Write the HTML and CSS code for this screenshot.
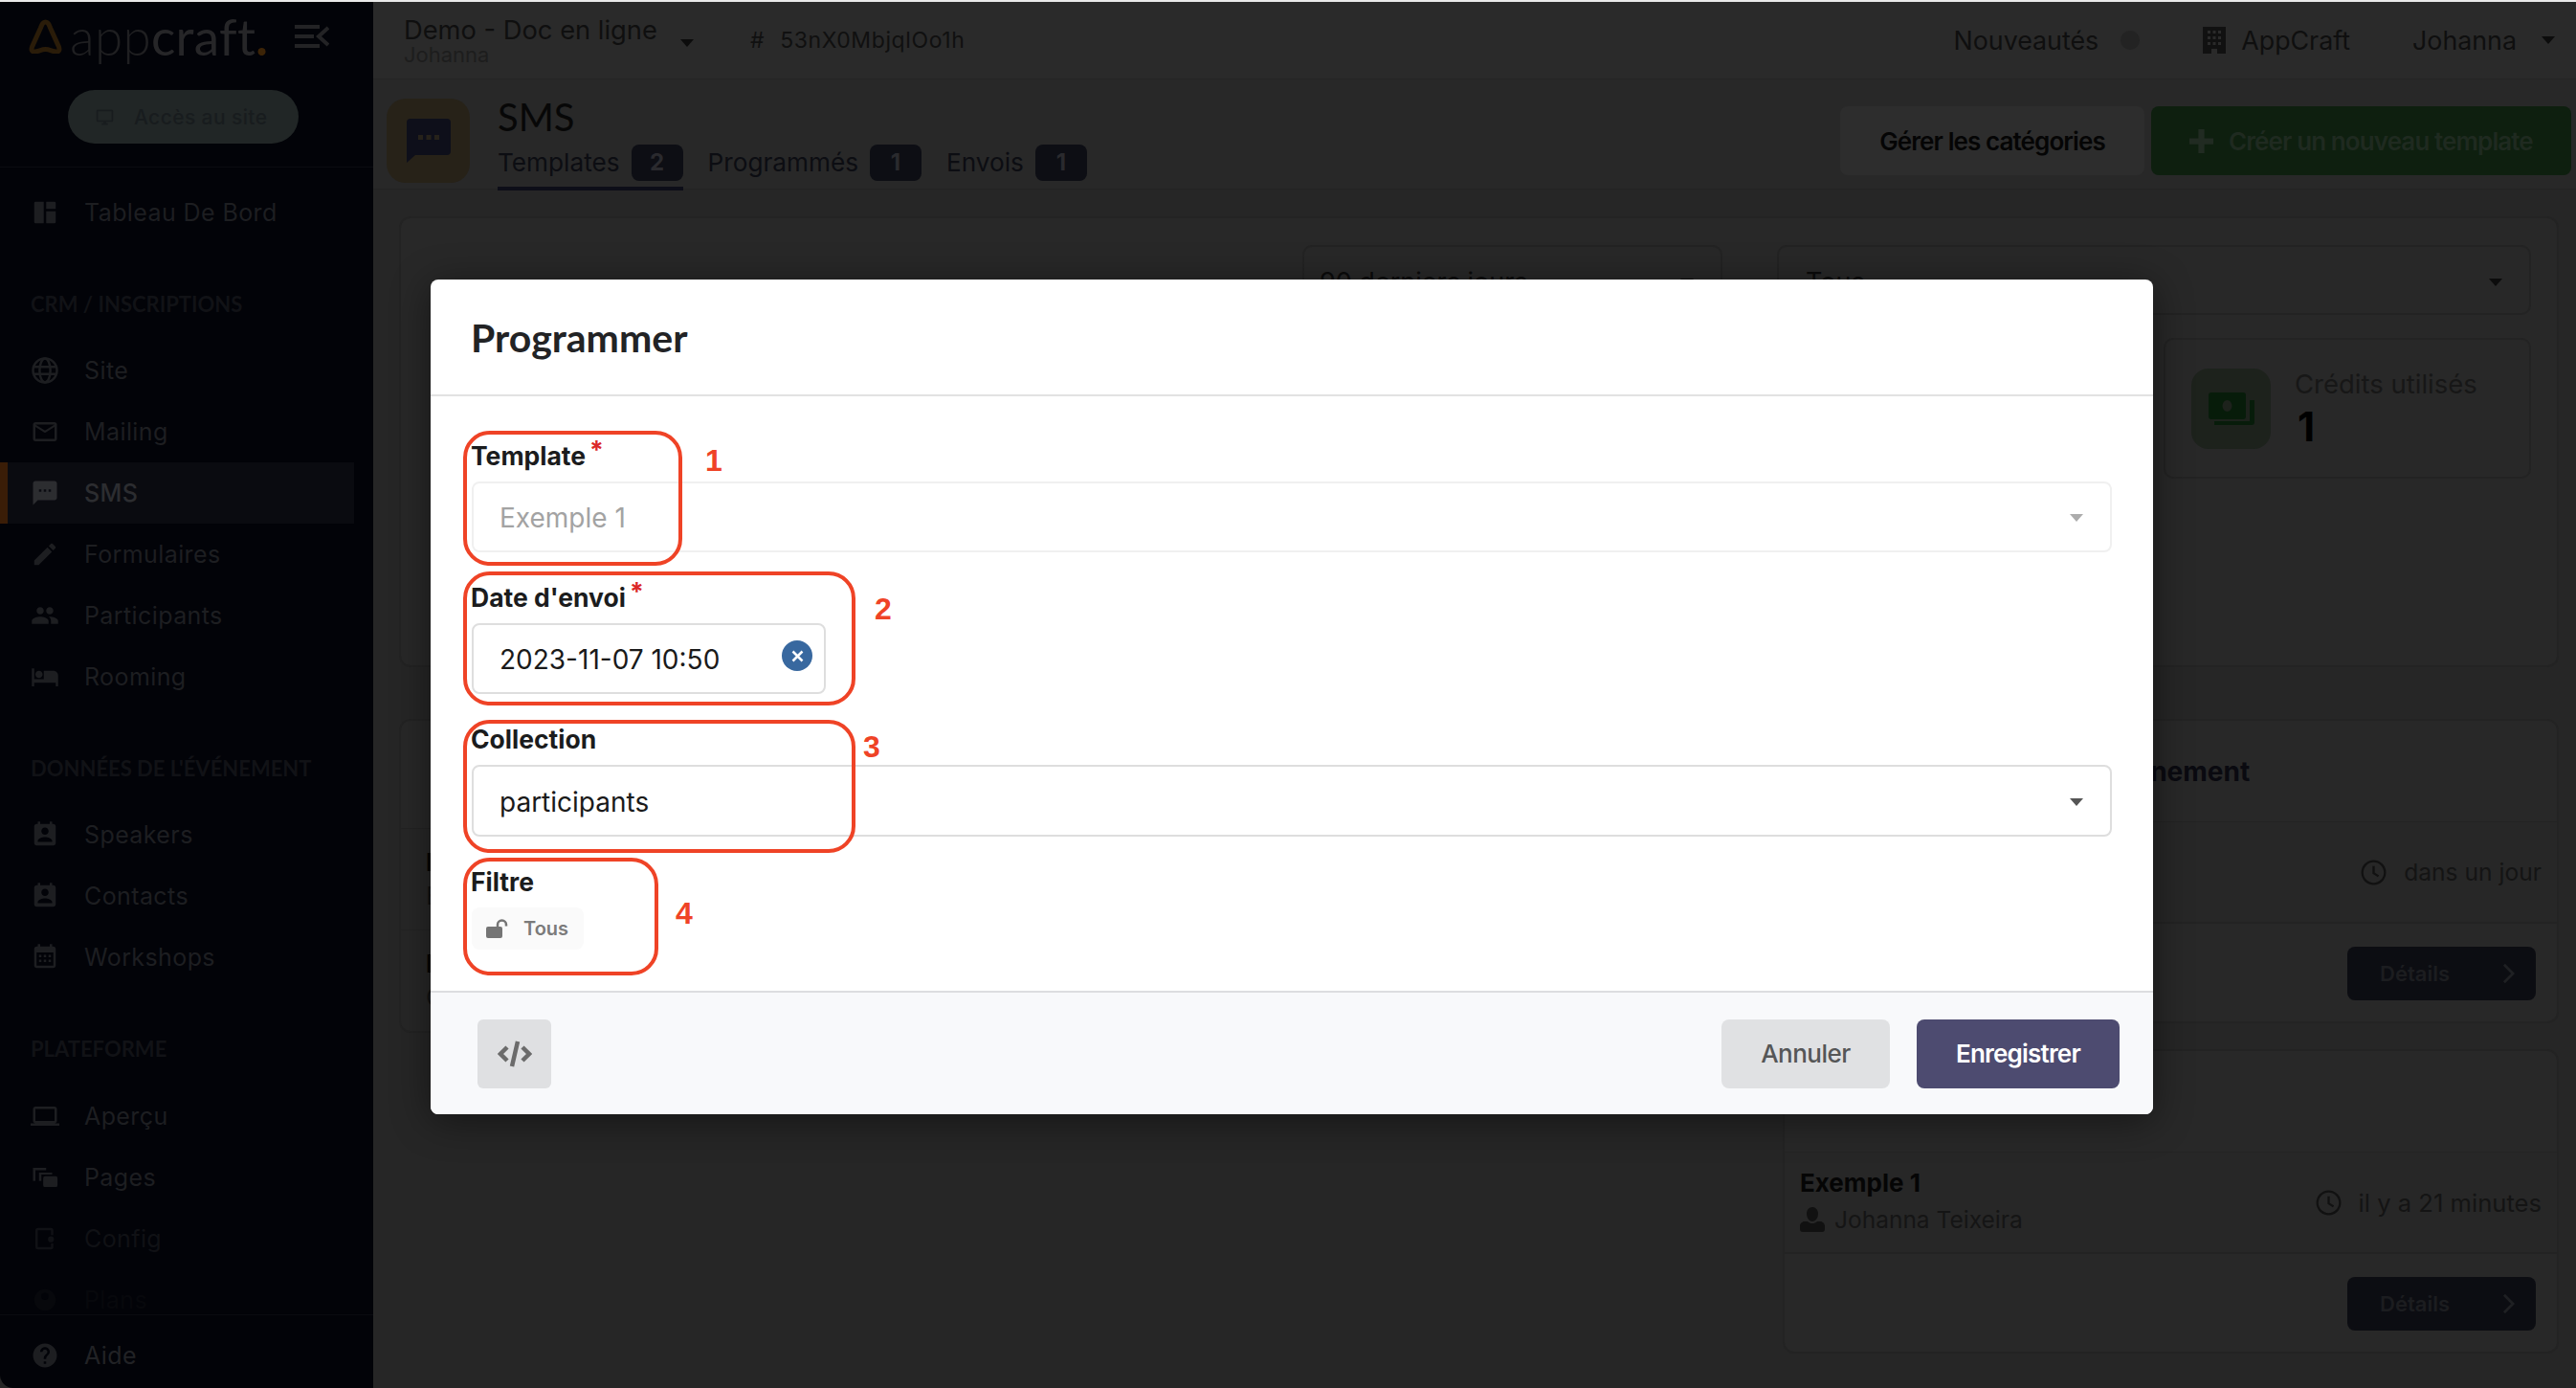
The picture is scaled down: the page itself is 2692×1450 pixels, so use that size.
FILE: index.html
```html
<!DOCTYPE html>
<html lang="fr">
<head>
<meta charset="utf-8">
<title>SMS - Appcraft</title>
<link rel="stylesheet" href="styles.css">
</head>
<body>
<div class="app">
  <aside class="sidebar">
    <div class="brand">
      <svg class="brand-mark" viewBox="0 0 35 36"><path d="M17.5 3 C15 3 14 5 12.5 9 L3.5 29 C2.5 32 3 34 6 34 C10 34 13 31.500 17.500 31.500 C22 31.500 25 34 29 34 C32 34 32.500 32 31.500 29 L22.500 9 C21 5 20 3 17.500 3 Z"/></svg>
      <span class="brand-name"><span class="brand-light">app</span><span class="brand-bold">craft</span><span class="brand-dot">.</span></span>
      <svg class="brand-toggle" viewBox="0 0 36 24"><path d="M0 2h26M0 12h20M0 22h26M35 3 25 12l10 9"/></svg>
    </div>
    <div class="site-block">
      <a class="site-btn">
        <svg class="ic-monitor" viewBox="0 0 24 24"><path d="M21 2H3a2 2 0 0 0-2 2v12a2 2 0 0 0 2 2h7v2H8v2h8v-2h-2v-2h7a2 2 0 0 0 2-2V4a2 2 0 0 0-2-2zm0 14H3V4h18v12z"/></svg>
        <span>Accès au site</span>
      </a>
    </div>
    <nav class="nav">
      <a class="nav-item"><svg viewBox="0 0 24 24"><path d="M4 3h7v18H4a1 1 0 0 1-1-1V4a1 1 0 0 1 1-1zm9 0h7a1 1 0 0 1 1 1v5h-8V3zm0 8h8v9a1 1 0 0 1-1 1h-7V11z"/></svg><span>Tableau De Bord</span></a>
      <div class="nav-title">CRM / INSCRIPTIONS</div>
      <a class="nav-item"><svg viewBox="0 0 24 24" class="line"><circle cx="12" cy="12" r="10"/><ellipse cx="12" cy="12" rx="4.500" ry="10"/><path d="M2.500 9h19M2.500 15h19"/></svg><span>Site</span></a>
      <a class="nav-item"><svg viewBox="0 0 24 24"><path d="M20 4H4c-1.100 0-2 .9-2 2v12c0 1.100.9 2 2 2h16c1.100 0 2-.9 2-2V6c0-1.100-.9-2-2-2zm0 14H4V8l8 5 8-5v10zm-8-7L4 6h16l-8 5z"/></svg><span>Mailing</span></a>
      <a class="nav-item active"><svg viewBox="0 0 24 24"><path d="M20 2H4c-1.100 0-1.990.9-1.990 2L2 22l4-4h14c1.100 0 2-.9 2-2V4c0-1.100-.9-2-2-2zM9 11H7V9h2v2zm4 0h-2V9h2v2zm4 0h-2V9h2v2z"/></svg><span>SMS</span></a>
      <a class="nav-item"><svg viewBox="0 0 24 24"><path d="M3 17.250V21h3.750L17.810 9.940l-3.750-3.750L3 17.250zM20.710 7.040c.39-.39.39-1.020 0-1.410l-2.340-2.340c-.39-.39-1.020-.39-1.410 0l-1.830 1.830 3.750 3.750 1.830-1.830z"/></svg><span>Formulaires</span></a>
      <a class="nav-item"><svg viewBox="0 0 24 24"><path d="M16 11c1.660 0 2.990-1.340 2.990-3S17.660 5 16 5c-1.660 0-3 1.340-3 3s1.340 3 3 3zm-8 0c1.660 0 2.990-1.340 2.990-3S9.660 5 8 5C6.340 5 5 6.340 5 8s1.340 3 3 3zm0 2c-2.330 0-7 1.170-7 3.500V19h14v-2.500c0-2.330-4.670-3.500-7-3.500zm8 0c-.29 0-.62.02-.97.05 1.160.84 1.970 1.970 1.970 3.450V19h6v-2.500c0-2.330-4.670-3.500-7-3.500z"/></svg><span>Participants</span></a>
      <a class="nav-item"><svg viewBox="0 0 24 24"><path d="M7 13c1.660 0 3-1.340 3-3S8.660 7 7 7s-3 1.340-3 3 1.340 3 3 3zm12-6h-8v7H3V5H1v15h2v-3h18v3h2v-9c0-2.210-1.790-4-4-4z"/></svg><span>Rooming</span></a>
      <div class="nav-title">DONNÉES DE L'ÉVÉNEMENT</div>
      <a class="nav-item"><svg viewBox="0 0 24 24"><path d="M19 3h-1V1h-2v2H8V1H6v2H5c-1.110 0-2 .9-2 2v14c0 1.100.89 2 2 2h14c1.100 0 2-.9 2-2V5c0-1.100-.9-2-2-2zm-7 3c1.660 0 3 1.340 3 3s-1.340 3-3 3-3-1.340-3-3 1.340-3 3-3zm6 12H6v-1c0-2 4-3.100 6-3.100s6 1.100 6 3.100v1z"/></svg><span>Speakers</span></a>
      <a class="nav-item"><svg viewBox="0 0 24 24"><path d="M19 3h-1V1h-2v2H8V1H6v2H5c-1.110 0-2 .9-2 2v14c0 1.100.89 2 2 2h14c1.100 0 2-.9 2-2V5c0-1.100-.9-2-2-2zm-7 3c1.660 0 3 1.340 3 3s-1.340 3-3 3-3-1.340-3-3 1.340-3 3-3zm6 12H6v-1c0-2 4-3.100 6-3.100s6 1.100 6 3.100v1z"/></svg><span>Contacts</span></a>
      <a class="nav-item"><svg viewBox="0 0 24 24"><path d="M19 3h-1V1h-2v2H8V1H6v2H5c-1.100 0-2 .9-2 2v14c0 1.100.9 2 2 2h14c1.100 0 2-.9 2-2V5c0-1.100-.9-2-2-2zm0 16H5V8h14v11zM7 10h2v2H7zm4 0h2v2h-2zm4 0h2v2h-2zm-8 4h2v2H7zm4 0h2v2h-2zm4 0h2v2h-2z"/></svg><span>Workshops</span></a>
      <div class="nav-title nav-title-last">PLATEFORME</div>
      <a class="nav-item"><svg viewBox="0 0 24 24"><path d="M20 18c1.100 0 1.990-.9 1.990-2L22 6c0-1.100-.9-2-2-2H4c-1.100 0-2 .9-2 2v10c0 1.100.9 2 2 2H0v2h24v-2h-4zM4 6h16v10H4V6z"/></svg><span>Aperçu</span></a>
      <a class="nav-item"><svg viewBox="0 0 24 24"><path d="M2 4h11v2H4v9H2V4zm5 4h11v1.500H9V15H7V8zm5 3h9a1.500 1.500 0 0 1 1.500 1.500v6A1.500 1.500 0 0 1 21 20h-9a1.500 1.500 0 0 1-1.500-1.500v-6A1.500 1.500 0 0 1 12 11z"/></svg><span>Pages</span></a>
      <a class="nav-item dim"><svg viewBox="0 0 24 24"><path d="M6 3h11a2 2 0 0 1 2 2v4h-2V5H6v14h11v-3h2v3a2 2 0 0 1-2 2H6a2 2 0 0 1-2-2V5a2 2 0 0 1 2-2zm11 7a2.500 2.500 0 1 1 0 5 2.500 2.500 0 0 1 0-5z"/></svg><span>Config</span></a>
      <a class="nav-item dimmer"><svg viewBox="0 0 24 24"><path d="M12 3a9 9 0 1 0 0 18 9 9 0 0 0 0-18zm0 3a3 3 0 1 1 0 6 3 3 0 0 1 0-6z"/></svg><span>Plans</span></a>
    </nav>
    <div class="nav-foot">
      <a class="nav-item"><svg viewBox="0 0 24 24"><path d="M12 2C6.480 2 2 6.480 2 12s4.480 10 10 10 10-4.480 10-10S17.520 2 12 2zm1 17h-2v-2h2v2zm2.070-7.750l-.9.920C13.450 12.900 13 13.500 13 15h-2v-.5c0-1.100.45-2.100 1.170-2.830l1.240-1.260c.37-.36.59-.86.59-1.410 0-1.100-.9-2-2-2s-2 .9-2 2H8c0-2.210 1.790-4 4-4s4 1.790 4 4c0 .88-.36 1.680-.93 2.250z"/></svg><span>Aide</span></a>
    </div>
  </aside>

  <main class="main">
    <header class="topbar">
      <div class="event">
        <div class="event-name">Demo - Doc en ligne</div>
        <div class="event-owner">Johanna</div>
      </div>
      <i class="caret caret-event"></i>
      <div class="event-id"><span class="hash">#</span><span>53nX0MbjqlOo1h</span></div>
      <div class="topbar-right">
        <span class="top-link">Nouveautés</span>
        <i class="news-dot"></i>
        <svg class="ic-building" viewBox="0 0 24 28"><path fill-rule="evenodd" d="M0 0h24v28H15v-5H9v5H0V0zm5 4v3h3V4H5zm5.500 0v3h3V4h-3zM16 4v3h3V4h-3zM5 10v3h3v-3H5zm5.500 0v3h3v-3h-3zM16 10v3h3v-3h-3zM5 16v3h3v-3H5zm5.500 0v3h3v-3h-3zM16 16v3h3v-3h-3z"/></svg>
        <span class="top-link org">AppCraft</span>
        <span class="top-link user">Johanna</span>
        <i class="caret"></i>
      </div>
    </header>

    <section class="subheader">
      <div class="page-tile">
        <svg viewBox="0 0 46 46"><path d="M4 0h38a4 4 0 0 1 4 4v30a4 4 0 0 1-4 4H9L0 46V4a4 4 0 0 1 4-4z"/><path class="tile-dots" d="M12 17h5v5h-5zM20.500 17h5v5h-5zM29 17h5v5h-5z"/></svg>
      </div>
      <div class="page-head">
        <h1 class="page-title">SMS</h1>
        <div class="tabs">
          <a class="tab current"><span>Templates</span><b class="tab-badge">2</b></a>
          <a class="tab"><span>Programmés</span><b class="tab-badge">1</b></a>
          <a class="tab"><span>Envois</span><b class="tab-badge">1</b></a>
        </div>
      </div>
      <div class="page-actions">
        <a class="btn btn-muted">Gérer les catégories</a>
        <a class="btn btn-green"><svg viewBox="0 0 24 24"><path d="M9 0h6v9h9v6h-9v9H9v-9H0V9h9z"/></svg>Créer un nouveau template</a>
      </div>
    </section>

    <div class="content">
      <section class="card overview">
        <div class="filters">
          <div class="select select-period"><span>90 derniers jours</span><i class="caret"></i></div>
          <div class="select select-cat"><span>Tous</span><i class="caret"></i></div>
        </div>
        <div class="stats">
          <div class="stat">
            <div class="stat-icon"><svg viewBox="0 0 48 34"><path fill-rule="evenodd" d="M3 0h33a3 3 0 0 1 3 3v22a3 3 0 0 1-3 3H3a3 3 0 0 1-3-3V3a3 3 0 0 1 3-3zm16.500 8a5 6 0 1 0 0 12 5 6 0 0 0 0-12z"/><path d="M43 8h5v23a3 3 0 0 1-3 3H6v-4h37z"/></svg></div>
            <div class="stat-text"><div class="stat-label">Crédits utilisés</div><div class="stat-value">1</div></div>
          </div>
        </div>
      </section>

      <div class="columns">
        <section class="card list list-left">
          <div class="list-head"></div>
          <div class="row"><div><div class="row-title">Ex</div><div class="row-sub">Ex</div></div></div>
          <div class="row"><div><div class="row-title">Ex</div><div class="row-sub">Co</div></div></div>
        </section>
        <div class="right-col">
          <section class="card list">
            <div class="list-head"><h2 class="title-end">Prochains envois de l'événement</h2></div>
            <div class="row">
              <div></div>
              <div class="when"><svg class="ic-clock" viewBox="0 0 24 24"><circle cx="12" cy="12" r="10.500"/><path d="M12 6v6.500l4.500 3"/></svg>dans un jour</div>
            </div>
            <div class="row-foot"><a class="btn-details">Détails<svg viewBox="0 0 14 24"><path d="M2 2l10 10L2 22"/></svg></a></div>
          </section>
          <section class="card list">
            <div class="list-head"></div>
            <div class="row">
              <div>
                <div class="row-title">Exemple 1</div>
                <div class="row-author"><svg viewBox="0 0 26 26"><path d="M13 0c3.500 0 6 3 6 7s-2.500 8-6 8-6-4-6-8 2.500-7 6-7zM5 15h3c1.500 1.500 3 2 5 2s3.500-.5 5-2h3c3 0 5 2.500 5 5v3a3 3 0 0 1-3 3H3a3 3 0 0 1-3-3v-3c0-2.500 2-5 5-5z"/></svg>Johanna Teixeira</div>
              </div>
              <div class="when when-past"><svg class="ic-clock" viewBox="0 0 24 24"><circle cx="12" cy="12" r="10.500"/><path d="M12 6v6.500l4.500 3"/></svg>il y a 21 minutes</div>
            </div>
            <div class="row-foot"><a class="btn-details">Détails<svg viewBox="0 0 14 24"><path d="M2 2l10 10L2 22"/></svg></a></div>
          </section>
        </div>
      </div>
    </div>
  </main>
</div>

<div class="backdrop">
  <div class="modal">
    <div class="modal-head">Programmer</div>
    <div class="modal-body">
      <div class="field">
        <label class="field-label req">Template</label>
        <div class="input disabled"><span>Exemple 1</span><i class="arrow"></i></div>
      </div>
      <div class="field">
        <label class="field-label req">Date d'envoi</label>
        <div class="input date"><span>2023-11-07 10:50</span>
          <i class="clear"><svg viewBox="0 0 12 12"><path d="M2 2l8 8M10 2l-8 8"/></svg></i>
        </div>
      </div>
      <div class="field">
        <label class="field-label">Collection</label>
        <div class="input input-tall"><span>participants</span><i class="arrow"></i></div>
      </div>
      <div class="field">
        <label class="field-label">Filtre</label>
        <div class="chip">
          <svg viewBox="0 0 24 20"><rect x="0" y="8" width="17" height="12" rx="2"/><path class="lock-arc" d="M12 9V6a4.500 4.500 0 0 1 9 0v1.500"/></svg>
          <span>Tous</span>
        </div>
      </div>
    </div>
    <div class="modal-foot">
      <button class="code-btn"><svg viewBox="0 0 36 28"><path d="M10 7l-7 7 7 7M26 7l7 7-7 7M21 1l-6 26"/></svg></button>
      <div class="foot-actions">
        <button class="m-btn m-cancel">Annuler</button>
        <button class="m-btn m-save">Enregistrer</button>
      </div>
    </div>
    <div class="mark mark-1"></div><span class="mark-num num-1">1</span>
    <div class="mark mark-2"></div><span class="mark-num num-2">2</span>
    <div class="mark mark-3"></div><span class="mark-num num-3">3</span>
    <div class="mark mark-4"></div><span class="mark-num num-4">4</span>
  </div>
</div>
</body>
</html>
```
FILE: styles.css
```css
* { box-sizing: border-box; }
html, body { margin: 0; padding: 0; }
body {
  width: 2692px;
  height: 1450px;
  overflow: hidden;
  position: relative;
  border-top: 2px solid #e9e9e9;
  background: #262626;
  font-family: "Inter", "Liberation Sans", sans-serif;
  color: #101010;
}
a { text-decoration: none; color: inherit; }
h1, h2 { margin: 0; }
.app { display: flex; height: 1448px; }

/* sidebar */
.sidebar {
  width: 390px;
  flex: none;
  background: #020308;
  display: flex;
  flex-direction: column;
  border-bottom-left-radius: 14px;
}
.brand {
  height: 92px;
  padding: 0 0 20px 30px;
  display: flex;
  align-items: center;
}
.brand-mark { width: 35px; height: 36px; fill: none; stroke: #2a1c09; stroke-width: 5; }
.brand-name {
  margin-left: 8px;
  font-family: "Lato", sans-serif;
  font-size: 53px;
  line-height: 60px;
  letter-spacing: 0.3px;
  color: #1f1f21;
}
.brand-light { font-weight: 300; }
.brand-bold { font-weight: 400; color: #262628; }
.brand-dot { color: #3c2407; font-weight: 700; }
.brand-toggle { width: 36px; height: 24px; margin-left: auto; margin-right: 46px; fill: none; stroke: #232325; stroke-width: 4; }
.site-block { padding: 0 0 24px 71px; border-bottom: 1px solid #0a0b10; }
.site-btn {
  width: 241px;
  height: 56px;
  border-radius: 28px;
  background: #212626;
  display: flex;
  align-items: center;
  padding-left: 29px;
  gap: 21px;
  font-size: 21px;
  font-weight: 500;
  letter-spacing: 0.4px;
  color: #181c1e;
}
.ic-monitor { width: 19px; height: 19px; fill: #181c1e; flex: none; }
.nav { flex: 1; overflow: hidden; padding-top: 15px; border-bottom: 1px solid #0a0b10; }
.nav-title {
  padding: 52px 0 25px 32px;
  font-family: "Lato", sans-serif;
  font-weight: 700;
  font-size: 22px;
  line-height: 24px;
  color: #111216;
  white-space: nowrap;
}
.nav-title-last { padding-bottom: 26px; }
.nav-item {
  width: 370px;
  height: 64px;
  display: flex;
  align-items: center;
  padding-left: 32px;
  gap: 26px;
  font-size: 25px;
  letter-spacing: 0.4px;
  color: #1d1e21;
}
.nav-item svg { width: 30px; height: 30px; fill: #1d1e21; flex: none; }
.nav-item svg.line { fill: none; stroke: #1d1e21; stroke-width: 2; }
.nav-item.active { background: #0a0b10; box-shadow: inset 8px 0 0 #3a1d07; font-weight: 500; color: #2c2d30; }
.nav-item.active svg { fill: #2c2d30; }
.nav-item.dim { color: #101115; }
.nav-item.dim svg { fill: #101115; }
.nav-item.dimmer { color: #07080c; }
.nav-item.dimmer svg { fill: #07080c; }
.nav-foot { height: 76px; padding-top: 10px; }
.nav-foot .nav-item { color: #212225; }

/* top bar */
.main { flex: 1; min-width: 0; display: flex; flex-direction: column; }
.topbar {
  height: 81px;
  flex: none;
  background: #2a2a2a;
  border-bottom: 1px solid #252525;
  display: flex;
  align-items: center;
  padding-left: 32px;
}
.event { width: 264px; padding-bottom: 2px; }
.event-name { font-size: 27.300px; line-height: 32px; color: #0f0f0f; white-space: nowrap; }
.event-owner { font-size: 22px; line-height: 18px; color: #1d1d1d; }
.caret {
  display: block;
  width: 0;
  height: 0;
  border-left: 7px solid transparent;
  border-right: 7px solid transparent;
  border-top: 8px solid #0c0c0c;
}
.caret-event { margin: 6px 0 0 25px; }
.event-id { margin-left: 59px; font-size: 23px; letter-spacing: 0.6px; color: #101010; display: flex; gap: 16px; }
.topbar-right { margin-left: auto; padding-right: 22px; display: flex; align-items: center; }
.top-link { font-size: 26.800px; color: #0f0f0f; white-space: nowrap; }
.news-dot { width: 20px; height: 20px; border-radius: 50%; background: #232323; margin: 0 66px 0 23px; }
.ic-building { width: 24px; height: 28px; fill: #111; margin-right: 16px; }
.user { margin-left: 65px; margin-right: 26px; }

/* sub header */
.subheader {
  height: 115px;
  flex: none;
  background: #282828;
  border-bottom: 1px solid #232323;
  display: flex;
  padding: 20px 5px 0 14px;
}
.page-tile {
  width: 87px;
  height: 88px;
  background: #272218;
  border-radius: 20px;
  display: flex;
  align-items: center;
  justify-content: center;
}
.page-tile svg { width: 46px; height: 46px; fill: #0e0f1a; }
.page-tile .tile-dots { fill: #26221a; }
.page-head { margin-left: 29px; margin-top: -3px; }
.page-title {
  font-family: "Lato", sans-serif;
  font-weight: 400;
  font-size: 40px;
  line-height: 44px;
  color: #070707;
}
.tabs { display: flex; gap: 26px; margin-top: 7px; }
.tab { display: flex; align-items: flex-start; gap: 12px; height: 48px; font-size: 26.200px; line-height: 38px; color: #0c0d12; }
.tab.current { border-bottom: 4px solid #0d0e18; height: 48px; }
.tab-badge {
  width: 54px;
  height: 38px;
  border-radius: 8px;
  background: #0d0e14;
  color: #2a2a2e;
  font-size: 24px;
  font-weight: 700;
  text-align: center;
}
.page-actions { margin-left: auto; margin-top: 8px; display: flex; gap: 7px; }
.btn {
  height: 72px;
  border-radius: 8px;
  display: flex;
  align-items: center;
  font-size: 26px;
  font-weight: 600;
  letter-spacing: -0.9px;
  white-space: nowrap;
}
.btn-muted { width: 318px; justify-content: center; background: #2d2d2d; color: #050505; }
.btn-green { width: 439px; padding-left: 40px; gap: 16px; background: #0e1f0f; color: #1f2a20; }
.btn-green svg { width: 25px; height: 25px; fill: #212b22; }

/* content */
.content { flex: 1; padding: 28px 18px 0 27px; }
.card { background: #282828; border: 2px solid #232323; border-radius: 12px; }
.overview { height: 471px; padding: 28px 27px 0 0; }
.filters { display: flex; justify-content: flex-end; gap: 57px; }
.select {
  height: 73px;
  border: 2px solid #232323;
  border-radius: 10px;
  display: flex;
  align-items: center;
  justify-content: space-between;
  padding: 4px 28px 0;
  font-size: 27px;
  color: #0b0b0b;
}
.select-period { width: 439px; padding-left: 16px; }
.select-cat { width: 788px; }
.stats { display: flex; justify-content: flex-end; margin-top: 24px; }
.stat {
  width: 384px;
  height: 147px;
  border: 2px solid #232323;
  border-radius: 10px;
  display: flex;
  align-items: center;
  padding-left: 27px;
  gap: 25px;
}
.stat-icon {
  width: 83px;
  height: 84px;
  border-radius: 18px;
  background: #1d221c;
  display: flex;
  align-items: center;
  justify-content: center;
}
.stat-icon svg { width: 48px; height: 34px; fill: #071c0a; }
.stat-label { font-size: 27.500px; line-height: 34px; color: #171717; white-space: nowrap; }
.stat-value { font-size: 42px; line-height: 46px; font-weight: 700; color: #000; margin: 5px 0 0 3px; }

.columns {
  display: grid;
  grid-template-columns: 1426px 811px;
  gap: 20px;
  margin-top: 54px;
  align-items: start;
}
.right-col { display: flex; flex-direction: column; gap: 27px; }
.list { overflow: hidden; }
.list-left .list-head { height: 112px; }
.list-left .row { padding-left: 26px; }
.list-head { height: 105px; display: flex; align-items: center; padding-left: 16px; }
.list-head h2 { font-size: 28px; font-weight: 700; color: #0a0a10; white-space: nowrap; }
.title-end { margin-left: 19px; }
.row {
  height: 105px;
  border-top: 1px solid #232323;
  display: flex;
  align-items: center;
  justify-content: space-between;
  padding: 0 16px;
  background: #272727;
}
.list-left .row { height: 106px; }
.row-title { font-size: 26px; line-height: 34px; font-weight: 700; color: #050505; }
.row-sub { font-size: 26px; line-height: 36px; color: #151515; }
.row-author { display: flex; align-items: center; gap: 10px; margin-top: 2px; font-size: 24.500px; line-height: 38px; color: #151515; }
.row-author svg { width: 26px; height: 26px; fill: #111; }
.when { display: flex; align-items: center; gap: 18px; font-size: 24.600px; color: #141414; }
.when-past { font-size: 25.600px; }
.ic-clock { width: 27px; height: 27px; fill: none; stroke: #111; stroke-width: 2; }
.row-foot {
  height: 104px;
  border-top: 2px solid #232323;
  display: flex;
  align-items: center;
  justify-content: flex-end;
  padding: 2px 22px 0 0;
}
.btn-details {
  width: 197px;
  height: 56px;
  border-radius: 8px;
  background: #0c0d12;
  display: flex;
  align-items: center;
  justify-content: space-between;
  padding: 0 22px 0 34px;
  font-size: 22px;
  font-weight: 600;
  color: #1c1d20;
}
.btn-details svg { width: 13px; height: 22px; fill: none; stroke: #1f2023; stroke-width: 3; }

/* modal */
.backdrop { position: absolute; inset: 0; padding: 290px 0 0 450px; }
.modal {
  position: relative;
  width: 1800px;
  height: 872px;
  background: #fff;
  border-radius: 8px;
  box-shadow: 0 6px 40px rgba(0, 0, 0, 0.45);
  display: flex;
  flex-direction: column;
  overflow: hidden;
}
.modal-head {
  height: 122px;
  flex: none;
  border-bottom: 2px solid #e2e2e2;
  padding-left: 42px;
  display: flex;
  align-items: center;
  font-family: "Lato", sans-serif;
  font-weight: 700;
  font-size: 41px;
  color: #222325;
}
.modal-body { flex: 1; padding: 49px 43px 0; display: flex; flex-direction: column; gap: 34px; }
.field-label {
  display: block;
  height: 28px;
  margin: 0 0 12px -1px;
  font-size: 26.500px;
  line-height: 26px;
  font-weight: 700;
  color: #1b1c1d;
}
.req::after { content: "*"; color: #db2828; margin-left: 4px; position: relative; top: -6px; }
.input {
  height: 74px;
  border: 2px solid #dedede;
  border-radius: 8px;
  display: flex;
  align-items: center;
  justify-content: space-between;
  padding: 2px 28px 0 27px;
  font-size: 28px;
  color: #1a1a1a;
}
.input-tall { height: 75px; }
.input.disabled { border-color: #f0f0f0; color: #a3a3a3; }
.arrow {
  display: block;
  width: 0;
  height: 0;
  border-left: 7px solid transparent;
  border-right: 7px solid transparent;
  border-top: 8px solid #555;
}
.disabled .arrow { border-top-color: #acacac; }
.input.date { width: 370px; padding-right: 12px; }
.clear {
  width: 32px;
  height: 32px;
  border-radius: 50%;
  background: #38689f;
  display: flex;
  align-items: center;
  justify-content: center;
  margin-top: -8px;
}
.clear svg { width: 15px; height: 15px; fill: none; stroke: #fff; stroke-width: 2; }
.chip {
  width: 117px;
  height: 44px;
  border-radius: 8px;
  background: #fafafa;
  display: flex;
  align-items: center;
  padding-left: 15px;
  gap: 15px;
  font-size: 20px;
  font-weight: 600;
  color: #7b7b7b;
}
.chip svg { width: 24px; height: 20px; fill: #757575; }
.chip .lock-arc { fill: none; stroke: #757575; stroke-width: 2.5; }
.modal-foot {
  height: 129px;
  flex: none;
  background: #f8f9fb;
  border-top: 2px solid #dcdde0;
  display: flex;
  align-items: center;
  justify-content: space-between;
  padding: 0 35px 0 49px;
}
.code-btn {
  width: 77px;
  height: 72px;
  border: 0;
  border-radius: 6px;
  background: #dfe0e2;
  display: flex;
  align-items: center;
  justify-content: center;
  padding: 0;
}
.code-btn svg { width: 36px; height: 28px; fill: none; stroke: #6b6b6b; stroke-width: 4.500; }
.foot-actions { display: flex; gap: 28px; }
.m-btn {
  height: 72px;
  border: 0;
  border-radius: 8px;
  font-family: "Inter", sans-serif;
  font-size: 26px;
  font-weight: 500;
  letter-spacing: -0.5px;
}
.m-cancel { width: 176px; background: #e0e1e3; color: #555657; }
.m-save { width: 212px; background: #4d4b70; color: #fff; font-weight: 600; letter-spacing: -0.8px; }

/* red annotations over the modal */
.mark { position: absolute; left: 34px; border: 4px solid #ef4326; border-radius: 28px; }
.mark-1 { top: 158px; width: 229px; height: 141px; }
.mark-2 { top: 305px; width: 410px; height: 140px; }
.mark-3 { top: 460px; width: 410px; height: 139px; }
.mark-4 { top: 604px; width: 204px; height: 123px; }
.mark-num {
  position: absolute;
  font-family: "Liberation Sans", sans-serif;
  font-weight: 700;
  font-size: 32px;
  line-height: 32px;
  color: #ef4326;
}
.num-1 { left: 287px; top: 173px; }
.num-2 { left: 464px; top: 328px; }
.num-3 { left: 452px; top: 472px; }
.num-4 { left: 256px; top: 646px; }
```
